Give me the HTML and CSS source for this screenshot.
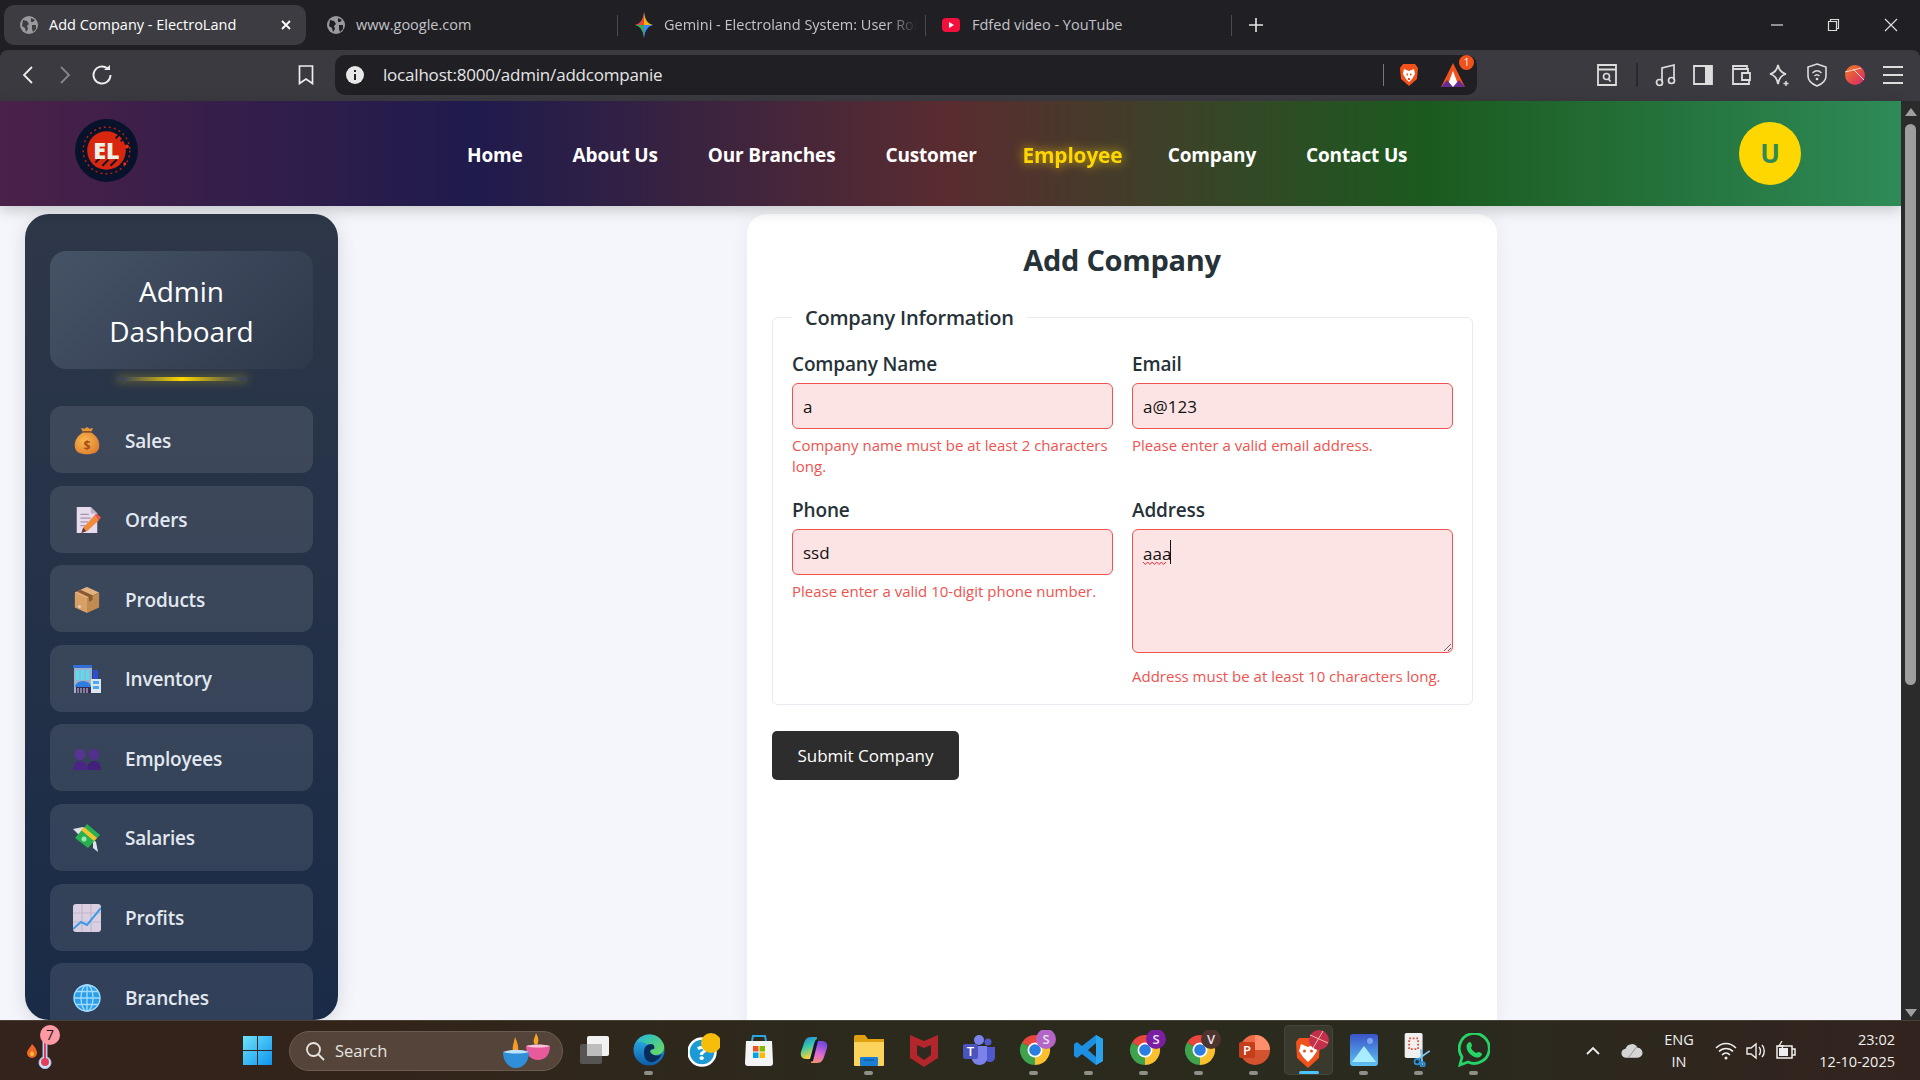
FILE: index.html
```html
<!DOCTYPE html>
<html>
<head>
    <meta charset="UTF-8">
    <title>Add Company - ElectroLand</title>
    <link rel="stylesheet" href="styles.css">
</head>
<body>
    <!-- browser tabs -->
    <div class="tabstrip">
        <div class="tab tab-active">
            <svg class="tab-ico" viewBox="0 0 18 18"><circle cx="9" cy="9" r="9" fill="#9a9a9e"/><path d="M3 4l4 1 2 3-2 2 1 3-2 3-1-4-3-2zM11 2l4 2-2 2-2 0zM12 9l4 0 0 4-3 3-1-3z" fill="#3d3d42"/></svg>
            <span class="tab-title">Add Company - ElectroLand</span>
            <svg class="tab-close" viewBox="0 0 12 12"><path d="M2 2l8 8M10 2l-8 8" stroke="#fff" stroke-width="1.8"/></svg>
        </div>
        <div class="tab tab-google">
            <svg class="tab-ico" viewBox="0 0 18 18"><circle cx="9" cy="9" r="9" fill="#9a9a9e"/><path d="M3 4l4 1 2 3-2 2 1 3-2 3-1-4-3-2zM11 2l4 2-2 2-2 0zM12 9l4 0 0 4-3 3-1-3z" fill="#1f1f24"/></svg>
            <span class="tab-title">www.google.com</span>
        </div>
        <div class="tab tab-gemini">
            <svg class="tab-ico" viewBox="0 0 18 26"><path d="M9 0C9.600 8 13 12 18 13 13 14 9.600 18 9 26 8.400 18 5 14 0 13 5 12 8.400 8 9 0z" fill="#4a90e2"/><path d="M9 0C9.600 8 13 12 18 13H9z" fill="#f4b400"/><path d="M18 13C13 14 9.600 18 9 26V13z" fill="#4285f4"/><path d="M9 26C8.400 18 5 14 0 13H9z" fill="#34a853"/><path d="M0 13C5 12 8.400 8 9 0V13z" fill="#ea4335"/></svg>
            <span class="tab-title tab-fade">Gemini - Electroland System: User Rol</span>
        </div>
        <div class="tab tab-youtube">
            <svg class="tab-ico" viewBox="0 0 18 14"><rect width="18" height="14" rx="4" fill="#f40f3c"/><path d="M7 4l5 3-5 3z" fill="#fff"/></svg>
            <span class="tab-title">Fdfed video - YouTube</span>
        </div>
        <svg class="tab-plus" viewBox="0 0 14 14"><path d="M7 0v14M0 7h14" stroke="#e6e6e6" stroke-width="1.600"/></svg>
        <div class="win-controls">
            <svg viewBox="0 0 14 14"><path d="M1 7h12" stroke="#ddd" stroke-width="1.200"/></svg>
            <svg viewBox="0 0 14 14"><path d="M3.500 3.500V1.500h8v9h-2M1.500 3.500h8v9h-8z" fill="none" stroke="#ddd" stroke-width="1.200"/></svg>
            <svg viewBox="0 0 14 14"><path d="M1 1l12 12M13 1L1 13" stroke="#ddd" stroke-width="1.200"/></svg>
        </div>
    </div>

    <!-- browser toolbar -->
    <div class="toolbar">
        <svg class="tb-nav nav-back" viewBox="0 0 12 20"><path d="M10 2L2 10l8 8" fill="none" stroke="#eee" stroke-width="1.800"/></svg>
        <svg class="tb-nav nav-fwd" viewBox="0 0 12 20"><path d="M2 2l8 8-8 8" fill="none" stroke="#85858a" stroke-width="1.800"/></svg>
        <svg class="tb-nav nav-reload" viewBox="0 0 22 22"><path d="M16.500 4.500A8.500 8.500 0 1 0 19.500 11" fill="none" stroke="#eee" stroke-width="1.900"/><path d="M13 6h6V1z" fill="#eee"/></svg>
        <svg class="tb-nav nav-mark" viewBox="0 0 16 20"><path d="M1.500 1h13v17.500L8 14l-6.500 4.500z" fill="none" stroke="#eee" stroke-width="1.700"/></svg>
        <div class="addressbar">
            <svg class="info-ico" viewBox="0 0 18 18"><circle cx="9" cy="9" r="9" fill="#e8e8e8"/><path d="M9 4v2M9 8v6" stroke="#222" stroke-width="2"/></svg>
            <span class="url">localhost:8000/admin/addcompanie</span>
            <span class="addr-sep"></span>
            <svg class="addr-brave" viewBox="0 0 20 24"><path d="M4 1h12l3 4-1 11-8 7-8-7L1 5z" fill="#f1511b"/><path d="M5 6l5 2 5-2 1 5-3 5-3 3-3-3-3-5z" fill="#fff"/><path d="M7.500 10.500h1.500v2H7.500zM11 10.500h1.500v2H11zM9 15h2v2H9z" fill="#f1511b"/></svg>
            <span class="addr-rewards">
                <svg viewBox="0 0 24 24"><path d="M12 0L24 24H0z" fill="#f1511b"/><path d="M12 8l6 16H6z" fill="#fff"/><path d="M0 24l6-7 6 7zM24 24l-6-7-6 7z" fill="#662d91"/></svg>
                <span class="addr-badge">1</span>
            </span>
        </div>
        <div class="tb-tools">
            <svg class="tool-reader" viewBox="0 0 22 24"><path d="M2 2h18v20H2zM2 6.500h18" fill="none" stroke="#ddd" stroke-width="1.800"/><circle cx="10.500" cy="13.500" r="3" fill="none" stroke="#ddd" stroke-width="1.600"/><path d="M12.500 16l2 2.500" stroke="#ddd" stroke-width="1.600"/></svg>
            <span class="tool-sep"></span>
            <svg class="tool-music" viewBox="0 0 22 24"><path d="M7 19V5l12-3v15" fill="none" stroke="#ddd" stroke-width="1.700"/><circle cx="4.500" cy="19.500" r="3" fill="none" stroke="#ddd" stroke-width="1.700"/><circle cx="16.500" cy="17.500" r="3" fill="none" stroke="#ddd" stroke-width="1.700"/></svg>
            <svg viewBox="0 0 22 24"><path d="M2 3h18v18H2z" fill="none" stroke="#ddd" stroke-width="1.800"/><path d="M13 3h7v18h-7z" fill="#ddd"/></svg>
            <svg viewBox="0 0 22 24"><path d="M17 6V3H3v18h16v-4M3 6h15v4M12 10h8v7h-8z" fill="none" stroke="#ddd" stroke-width="1.800"/></svg>
            <svg viewBox="0 0 22 24"><path d="M10 2c1 5 3 8 8 9-5 1-7 4-8 10-1-6-3-9-8-10 5-1 7-4 8-9z" fill="none" stroke="#ddd" stroke-width="1.700"/><path d="M18 18v5M15.500 20.500h5" stroke="#ddd" stroke-width="1.500"/></svg>
            <svg viewBox="0 0 22 24"><path d="M11 1l9 3v9c0 5-4 8-9 10-5-2-9-5-9-10V4z" fill="none" stroke="#ddd" stroke-width="1.600"/><path d="M6.500 10c3-3 6-3 9 0M8.500 13c1.500-1.500 3.500-1.500 5 0" fill="none" stroke="#ddd" stroke-width="1.400"/><circle cx="11" cy="16" r="1.300" fill="#ddd"/></svg>
            <svg viewBox="0 0 22 24"><defs><linearGradient id="prof" x1="0" y1="0" x2="1" y2="1"><stop offset="0" stop-color="#f47b20"/><stop offset="1" stop-color="#d6246e"/></linearGradient></defs><circle cx="11" cy="12" r="10" fill="url(#prof)"/><path d="M1 9l16 -4M9 6l11 11" stroke="#ffd9c9" stroke-width="1"/></svg>
            <svg viewBox="0 0 22 24"><path d="M1 4h20M1 12h20M1 20h20" stroke="#ddd" stroke-width="2"/></svg>
        </div>
    </div>

    <div class="viewport">
        <div class="page">
            <header class="topnav">
                <div class="logo">
                    <svg viewBox="0 0 62 62"><circle cx="31" cy="31" r="31" fill="#08122a"/><circle cx="31" cy="31" r="19" fill="#d8260f"/><circle cx="31" cy="31" r="23" fill="none" stroke="#b3200e" stroke-width="1.500" stroke-dasharray="2 3"/><path d="M20 43l6-6M27 46l6-6M35 46l6-6M40 19l5-5M45 22l4-4" stroke="#08122a" stroke-width="1.800"/><circle cx="51" cy="27" r="2" fill="#e8301a"/><circle cx="49" cy="44" r="1.500" fill="#e8301a"/><text x="31" y="39" class="logo-text">EL</text></svg>
                </div>
                <nav class="nav-links">
                    <a href="#">Home</a>
                    <a href="#">About Us</a>
                    <a href="#">Our Branches</a>
                    <a href="#">Customer</a>
                    <a href="#" class="nav-current">Employee</a>
                    <a href="#">Company</a>
                    <a href="#">Contact Us</a>
                </nav>
                <div class="avatar">U</div>
            </header>

            <div class="content">
                <aside class="sidebar">
                    <h2 class="side-title">Admin Dashboard</h2>
                    <div class="side-glow"></div>
                    <a class="side-item" href="#">
                        <svg viewBox="0 0 28 32"><defs><radialGradient id="bag" cx=".4" cy=".4" r=".8"><stop offset="0" stop-color="#fbb84e"/><stop offset="1" stop-color="#d9742a"/></radialGradient></defs><path d="M9 5L7 1l4 1 3-2 3 2 4-1-2 4z" fill="#e8963a"/><path d="M10 6h8c7 4 10 9 10 15 0 8-6 10-14 10S0 29 0 21c0-6 3-11 10-15z" fill="url(#bag)"/><path d="M10 5.500h8" stroke="#8a4a1a" stroke-width="1.500"/><text x="14" y="26" class="bag-text">$</text></svg>
                        <span>Sales</span>
                    </a>
                    <a class="side-item" href="#">
                        <svg viewBox="0 0 28 30"><path d="M3 1h15l7 7v21H3z" fill="#e6dcec"/><path d="M18 1v7h7z" fill="#bfb0c6"/><path d="M7 9h9M7 13h11M7 17h8M7 21h5" stroke="#a892ac" stroke-width="1.400"/><path d="M8 29l2-6L22 10l5 5L14 27z" fill="#f28a3c"/><path d="M22 10l2-2 5 4-2 3z" fill="#f0574c"/><path d="M8 29l2-6 3 4z" fill="#5a3a4a"/></svg>
                        <span>Orders</span>
                    </a>
                    <a class="side-item" href="#">
                        <svg viewBox="0 0 28 30"><path d="M14 1L1 7v16l13 6z" fill="#d9a066"/><path d="M14 13L1 7l13-6 13 6z" fill="#e4b27e"/><path d="M14 13l13-6v16l-13 6z" fill="#c08a50"/><path d="M7 4l13 6v5l-4 2v-5L3 6z" fill="#8a5a30"/><circle cx="6" cy="22" r="1.500" fill="#e8d0e0"/></svg>
                        <span>Products</span>
                    </a>
                    <a class="side-item" href="#">
                        <svg viewBox="0 0 28 28"><path d="M1 1h18v27H1z" fill="#9fb2c9"/><path d="M0 0h19v3H0z" fill="#2f6fd6"/><path d="M3 5h3v10H3zM8 5h3v10H8zM13 5h3v10h-3z" fill="#4fe0f5"/><path d="M20 5h5v13h-5z" fill="#2a4fd0"/><path d="M18 14h10v14H18z" fill="#dce6f0"/><path d="M20 16h6v3h-6zM20 21h6v3h-6z" fill="#4aa8f0"/><path d="M2 22a8 6 0 0 1 16 0z" fill="#2e7de0"/><path d="M3 22h15v6H3z" fill="#3b2a55"/><path d="M5 23v5M8 23v5M11 23v5M14 23v5" stroke="#cbd5e1"/></svg>
                        <span>Inventory</span>
                    </a>
                    <a class="side-item" href="#">
                        <svg viewBox="0 0 28 22"><path d="M14 22c0-5 2-9 7-9s7 4 7 9z" fill="#43207c"/><circle cx="21" cy="6.500" r="5.500" fill="#52308e"/><path d="M0 22c0-5 2-9 7-9s7 4 7 9z" fill="#4b2586"/><circle cx="7" cy="6.500" r="5.500" fill="#583494"/></svg>
                        <span>Employees</span>
                    </a>
                    <a class="side-item" href="#">
                        <svg viewBox="0 0 28 28"><path d="M0 5l10-2 4 6-8 2z" fill="#dfe3e8"/><path d="M20 15l3 3 2 10-5-4z" fill="#dfe3e8"/><path d="M2 14L14 0l13 11-12 13z" fill="#26b04f"/><path d="M8 6l13 11 3-3L11 3z" fill="#f4c430"/><circle cx="11" cy="15" r="2.500" fill="#9be8b0"/></svg>
                        <span>Salaries</span>
                    </a>
                    <a class="side-item" href="#">
                        <svg viewBox="0 0 28 28"><rect width="28" height="28" rx="3" fill="#d9cfe0"/><path d="M9 0v28M18 0v28M0 9h28M0 18h28" stroke="#c2b5cc" stroke-width="1.200"/><path d="M0 25l8-7 6 3L28 4" fill="none" stroke="#3b9be8" stroke-width="2"/></svg>
                        <span>Profits</span>
                    </a>
                    <a class="side-item" href="#">
                        <svg viewBox="0 0 28 28"><circle cx="14" cy="14" r="13.500" fill="#2f9ee8"/><g fill="none" stroke="#9fdcff" stroke-width="1.300"><circle cx="14" cy="14" r="13"/><ellipse cx="14" cy="14" rx="6" ry="13"/><path d="M14 1v26M1 14h26M3 7.500h22M3 20.500h22"/></g></svg>
                        <span>Branches</span>
                    </a>
                </aside>

                <main class="main">
                    <div class="card">
                        <h1>Add Company</h1>
                        <form>
                            <fieldset>
                                <legend>Company Information</legend>
                                <div class="form-grid">
                                    <div class="field">
                                        <label for="cname">Company Name</label>
                                        <input id="cname" type="text" value="a">
                                        <p class="err">Company name must be at least 2 characters long.</p>
                                    </div>
                                    <div class="field">
                                        <label for="cmail">Email</label>
                                        <input id="cmail" type="text" value="a@123">
                                        <p class="err">Please enter a valid email address.</p>
                                    </div>
                                    <div class="field">
                                        <label for="cphone">Phone</label>
                                        <input id="cphone" type="text" value="ssd">
                                        <p class="err">Please enter a valid 10-digit phone number.</p>
                                    </div>
                                    <div class="field">
                                        <label for="caddr">Address</label>
                                        <div class="area-wrap">
                                            <textarea id="caddr" spellcheck="false">aaa</textarea>
                                            <svg class="squiggle" viewBox="0 0 28 26"><path d="M0 22l2.300 2.500 2.300-2.500 2.300 2.500 2.300-2.500 2.300 2.500 2.300-2.500 2.300 2.500 2.300-2.500 2.300 2.500 2.300-2.500" fill="none" stroke="#e8303a" stroke-width="1"/><path d="M27.500 0v24" stroke="#111" stroke-width="1"/></svg>
                                        </div>
                                        <p class="err err-area">Address must be at least 10 characters long.</p>
                                    </div>
                                </div>
                            </fieldset>
                            <button type="button" class="submit-btn">Submit Company</button>
                        </form>
                    </div>
                </main>
            </div>
        </div>
        <div class="scrollbar">
            <span class="sb-up"></span>
            <span class="sb-thumb"></span>
            <span class="sb-down"></span>
        </div>
    </div>

    <!-- windows taskbar -->
    <footer class="taskbar">
        <div class="tk-weather">
            <svg viewBox="0 0 44 36"><path d="M8 11c3 3 5 6 5 9a5 5 0 0 1-10 0c0-3 3-5 5-9z" fill="#f0672a"/><path d="M8 18c1 1 2 2 2 3a2 2 0 0 1-4 0c0-1 1-2 2-3z" fill="#fbc02d"/><path d="M19 8h4v16a6 6 0 1 1-4 0z" fill="#cfe3f7" stroke="#9ec4ea"/><circle cx="21" cy="29" r="4" fill="#e33d5a"/><path d="M21 8v18" stroke="#e33d5a" stroke-width="2"/></svg>
            <span class="tk-temp">7</span>
        </div>
        <svg class="tk-start" viewBox="0 0 29 29"><defs><linearGradient id="wn" x1="0" y1="0" x2="1" y2="1"><stop offset="0" stop-color="#6ee4f8"/><stop offset="1" stop-color="#0c93f0"/></linearGradient></defs><path d="M0 0h14v14H0zM15 0h14v14H15zM0 15h14v14H0zM15 15h14v14H15z" fill="url(#wn)"/></svg>
        <div class="tk-search">
            <svg viewBox="0 0 20 20"><circle cx="8.500" cy="8.500" r="6.500" fill="none" stroke="#e8e4e0" stroke-width="1.800"/><path d="M13 13l6 6" stroke="#e8e4e0" stroke-width="1.800"/></svg>
            <span>Search</span>
            <svg class="tk-diya" viewBox="0 0 50 36"><path d="M34 0c2 4 3 6 2 10-1 2-3 2-4 0-1-3 1-6 2-10z" fill="#f5a623"/><path d="M24 13h24c0 9-5 14-12 14s-12-5-12-14z" fill="#e85a9b"/><path d="M24 13c6-2 18-2 24 0-6 2-18 2-24 0z" fill="#f9c6d8"/><path d="M13 4c2 5 4 9 3 14-1 2-4 2-5 0-1-4 1-9 2-14z" fill="#f59a23"/><path d="M1 19h26c0 10-6 16-13 16S1 29 1 19z" fill="#2f8fd8"/><path d="M1 19c7-3 19-3 26 0-7 2-19 2-26 0z" fill="#bde3fa"/></svg>
        </div>
        <div class="tk-apps">
            <div class="tk-app"><svg viewBox="0 0 32 34"><rect x="9" y="3" width="22" height="20" rx="2" fill="#f2f2f2"/><rect x="2" y="11" width="22" height="20" rx="2" fill="#5e5e5e" opacity=".85"/><rect x="9" y="11" width="15" height="12" fill="#bdbdbd"/></svg></div>
            <div class="tk-app has-dot"><svg viewBox="0 0 32 34"><defs><linearGradient id="edg" x1="0" y1="0" x2="0" y2="1"><stop offset="0" stop-color="#2fb6ee"/><stop offset="1" stop-color="#0c5da8"/></linearGradient><linearGradient id="edg2" x1="0" y1="0" x2="1" y2="1"><stop offset="0" stop-color="#22b8d8"/><stop offset="1" stop-color="#6fdc55"/></linearGradient></defs><circle cx="16" cy="17" r="15.500" fill="url(#edg)"/><path d="M4 9c6-10 22-11 27 3 1 6-3 10-8 10-6 0-7-4-5-6-2-5-9-8-14-7z" fill="url(#edg2)"/><path d="M11 19c0-5 3-8 7-8 3 0 4 3 3 5-4 0-5 3-2 5 3 2 7 2 10 0-3 6-8 9-12 8-5-1-6-6-6-10z" fill="#0a2c5c"/></svg></div>
            <div class="tk-app"><svg viewBox="0 0 32 34"><circle cx="14" cy="19" r="13.500" fill="#1c9ad6" stroke="#fff" stroke-width="2.500"/><text x="14" y="27" class="help-text">?</text><circle cx="23" cy="10" r="10" fill="#f7bd0b"/></svg></div>
            <div class="tk-app"><svg viewBox="0 0 32 34"><path d="M9 8l1-5h12l1 5" fill="none" stroke="#2aa5e0" stroke-width="2"/><path d="M3 8h26l1 22a3 3 0 0 1-3 3H5a3 3 0 0 1-3-3z" fill="#f4f4f4"/><path d="M10 13h5.500v5.500H10z" fill="#f25022"/><path d="M16.500 13H22v5.500h-5.500z" fill="#7fba00"/><path d="M10 19.500h5.500V25H10z" fill="#00a4ef"/><path d="M16.500 19.500H22V25h-5.500z" fill="#ffb900"/></svg></div>
            <div class="tk-app"><svg viewBox="0 0 32 34"><defs><linearGradient id="cop1" x1="0" y1="0" x2=".3" y2="1"><stop offset="0" stop-color="#2a7de8"/><stop offset=".5" stop-color="#35c9a8"/><stop offset="1" stop-color="#f4d23c"/></linearGradient><linearGradient id="cop2" x1=".3" y1="0" x2="0" y2="1"><stop offset="0" stop-color="#7a4ae0"/><stop offset=".5" stop-color="#e06ad0"/><stop offset="1" stop-color="#f79a5a"/></linearGradient></defs><path d="M19 4h-6C8 4 7 7 5 13l-2 6c-1 4 1 7 5 7h4c3 0 4-2 5-5z" fill="url(#cop1)"/><path d="M13 30h6c5 0 6-3 8-9l2-6c1-4-1-7-5-7h-4c-3 0-4 2-5 5z" fill="url(#cop2)"/><path d="M17 8l-5 18c-1 2 2 3 3 2l5-20c0-2-2-2-3 0z" fill="#101830"/></svg></div>
            <div class="tk-app has-dot"><svg viewBox="0 0 32 34"><path d="M1 4a2 2 0 0 1 2-2h9l3 4h16v26H1z" fill="#e0a010"/><path d="M1 9h30v23a1 1 0 0 1-1 1H2a1 1 0 0 1-1-1z" fill="#fcd45c"/><rect x="7" y="24" width="18" height="9" rx="1" fill="#1a7fd4"/><path d="M11 27h10" stroke="#0b4f94"/></svg></div>
            <div class="tk-app"><svg viewBox="0 0 32 34"><path d="M2 2l14 6 14-6v23l-14 9-14-9z" fill="#b3262c"/><path d="M9 12l7 3 7-3v10l-7 5-7-5z" fill="#2e2a20"/></svg></div>
            <div class="tk-app"><svg viewBox="0 0 32 34"><circle cx="25" cy="9" r="3.500" fill="#5059c9"/><path d="M21 14h11v9a5 5 0 0 1-10 2z" fill="#5059c9"/><circle cx="16" cy="7" r="5" fill="#7b83eb"/><path d="M9 13h15v13a7.500 6 0 0 1-15 0z" fill="#7b83eb"/><rect x="0" y="11" width="15" height="15" rx="2" fill="#4b53bc"/><text x="7.500" y="23" class="tile-text">T</text></svg></div>
            <div class="tk-app tk-chrome has-dot"><svg viewBox="0 0 44 40"><use href="#chrome-ic"/><circle cx="34" cy="9" r="10" fill="#b565c8"/><text x="34" y="14" class="chip-text">S</text></svg></div>
            <div class="tk-app has-dot"><svg viewBox="0 0 32 34"><path d="M23 2l7 4v22l-7 4L9 21l-5 4-3-2V11l3-2 5 4z" fill="#1c8fe0"/><path d="M23 10l-8 7 8 7z" fill="#2b2a1e"/><path d="M23 2l7 4v22l-7 4z" fill="#2aa3ee"/></svg></div>
            <div class="tk-app tk-chrome has-dot"><svg viewBox="0 0 44 40"><use href="#chrome-ic"/><circle cx="34" cy="9" r="10" fill="#7a1fa2"/><text x="34" y="14" class="chip-text">S</text></svg></div>
            <div class="tk-app tk-chrome has-dot"><svg viewBox="0 0 44 40"><use href="#chrome-ic"/><circle cx="34" cy="9" r="10" fill="#4e342e"/><text x="34" y="14" class="chip-text">V</text></svg></div>
            <div class="tk-app has-dot"><svg viewBox="0 0 32 34"><circle cx="17" cy="17" r="15" fill="#d35230"/><path d="M17 2a15 15 0 0 1 15 15H17z" fill="#ff8f6b"/><path d="M17 2a15 15 0 0 0-15 15h15z" fill="#ed6c47"/><rect x="1" y="9" width="16" height="16" rx="2" fill="#c43e1c"/><text x="9" y="22" class="tile-text">P</text></svg></div>
            <div class="tk-app tk-current tk-chrome"><svg viewBox="0 0 44 40"><path d="M12 8h18l3 4-1 16-11 10-11-10-1-16z" fill="#f1511b"/><path d="M14 14l7 3 7-3 2 7-4 6-5 5-5-5-4-6z" fill="#fff"/><circle cx="17.500" cy="21" r="1.500" fill="#f1511b"/><circle cx="24.500" cy="21" r="1.500" fill="#f1511b"/><circle cx="32" cy="10" r="10" fill="#c2304e"/><path d="M23 5l18 8M26 18l10-17" stroke="#ffb9a8" stroke-width="1"/></svg></div>
            <div class="tk-app has-dot"><svg viewBox="0 0 32 34"><defs><linearGradient id="pho" x1="0" y1="0" x2="0" y2="1"><stop offset="0" stop-color="#3a54c9"/><stop offset="1" stop-color="#5fc3f2"/></linearGradient></defs><rect x="2" y="1" width="28" height="32" rx="3" fill="url(#pho)"/><path d="M4 29L16 13l12 16z" fill="#a8ecff"/><circle cx="22" cy="8" r="3" fill="#7fa3f0"/></svg></div>
            <div class="tk-app has-dot"><svg viewBox="0 0 32 38"><rect width="20" height="28" rx="2" fill="#f0f0f0"/><path d="M5 6h10v12H5z" fill="none" stroke="#e0503a" stroke-width="2" stroke-dasharray="2 2"/><path d="M28 20L14 30M18 18l2 18" stroke="#7ec8f0" stroke-width="2"/><circle cx="14" cy="32" r="3" fill="none" stroke="#2b8fd8" stroke-width="2"/><circle cx="20" cy="35" r="2.500" fill="none" stroke="#2b8fd8" stroke-width="2"/></svg></div>
            <div class="tk-app has-dot"><svg viewBox="0 0 32 34"><path d="M2 32l2-8A15 15 0 1 1 10 29z" fill="none" stroke="#25d366" stroke-width="2.800"/><path d="M10 10c2-2 3-1 4 2 0 2-1 2-1 3 1 2 3 4 5 5 1 0 1-1 3-1 3 1 4 2 2 4-3 3-8 1-11-2s-5-8-2-11z" fill="#25d366"/></svg></div>
        </div>
        <div class="tk-tray">
            <svg class="tray-chev" viewBox="0 0 14 9"><path d="M1 8l6-6 6 6" fill="none" stroke="#eee" stroke-width="1.800"/></svg>
            <svg class="tray-cloud" viewBox="0 0 24 18"><path d="M6 17a5 5 0 0 1-1-10 7 7 0 0 1 13-1 5.500 5.500 0 0 1 0 11z" fill="#d5d5d5"/><path d="M8 17l9-12" stroke="#8f8f8f"/></svg>
            <div class="tray-lang">ENG<br>IN</div>
            <svg class="tray-wifi" viewBox="0 0 22 18"><path d="M1 6c6-6 14-6 20 0M4 9.500c4-4 10-4 14 0M7 13c2.500-2.500 5.500-2.500 8 0" fill="none" stroke="#eee" stroke-width="1.600"/><circle cx="11" cy="16" r="1.500" fill="#eee"/></svg>
            <svg class="tray-vol" viewBox="0 0 22 18"><path d="M1 6h4l5-4v14l-5-4H1z" fill="none" stroke="#eee" stroke-width="1.400"/><path d="M13 5c2 2 2 6 0 8M16 3c3 3 3 9 0 12" fill="none" stroke="#eee" stroke-width="1.400"/></svg>
            <svg class="tray-batt" viewBox="0 0 22 20"><path d="M3 5h15v12H3zM18 8h3v6h-3" fill="none" stroke="#eee" stroke-width="1.500"/><path d="M5 7h9v8H5z" fill="#eee"/><path d="M8 0l-3 5h4l-2 5" fill="none" stroke="#eee" stroke-width="1.300"/></svg>
            <div class="tray-clock">23:02<br>12-10-2025</div>
        </div>
    </footer>

    <svg class="icon-defs" width="0" height="0">
        <symbol id="chrome-ic" viewBox="0 0 44 40">
            <path d="M23 20L10 12.500A15 15 0 0 1 36 12.500z" fill="#e8453c"/>
            <path d="M23 20L36 12.500A15 15 0 0 1 23 35z" fill="#fbc02d"/>
            <path d="M23 20L23 35A15 15 0 0 1 10 12.500z" fill="#3fa34d"/>
            <circle cx="23" cy="20" r="7.500" fill="#fff"/>
            <circle cx="23" cy="20" r="5.800" fill="#2a7de1"/>
        </symbol>
    </svg>
</body>
</html>
```

FILE: styles.css
```css
* {
    box-sizing: border-box;
}
html, body {
    margin: 0;
    padding: 0;
    height: 100%;
    overflow: hidden;
}
body {
    display: flex;
    flex-direction: column;
    height: 1080px;
    font-family: "Open Sans", "Noto Sans", sans-serif;
    background-color: #1f1f24;
}
.icon-defs {
    position: absolute;
}

/* tabs */
.tabstrip {
    display: flex;
    align-items: center;
    height: 50px;
    flex: none;
    background-color: #1f1f24;
    color: #c4c4c8;
    font-size: 14.5px;
}
.tab {
    display: flex;
    align-items: center;
    height: 40px;
    flex: none;
    position: relative;
}
.tab-title {
    white-space: nowrap;
    padding-bottom: 2px;
}
.tab-ico {
    width: 18px;
    height: 18px;
    flex: none;
}
.tab-active {
    width: 302px;
    margin-left: 4px;
    padding-left: 16px;
    border-radius: 10px;
    background-color: #3c3c42;
    color: #ffffff;
}
.tab-active .tab-title {
    margin-left: 11px;
}
.tab-close {
    width: 12px;
    height: 12px;
    margin-left: auto;
    margin-right: 14px;
}
.tab-google {
    width: 311px;
    padding-left: 21px;
}
.tab-google .tab-title {
    margin-left: 11px;
}
.tab-gemini, .tab-youtube {
    border-left: 1px solid #4a4a50;
    height: 21px;
}
.tab-gemini {
    width: 308px;
    padding-left: 17px;
}
.tab-gemini .tab-ico {
    height: 26px;
}
.tab-gemini .tab-title {
    margin-left: 11px;
    -webkit-mask-image: linear-gradient(90deg, #000 88%, transparent);
    mask-image: linear-gradient(90deg, #000 88%, transparent);
}
.tab-youtube {
    width: 307px;
    padding-left: 16px;
    border-right: 1px solid #4a4a50;
}
.tab-youtube .tab-title {
    margin-left: 12px;
}
.tab-plus {
    width: 14px;
    height: 14px;
    margin-left: 17px;
}
.win-controls {
    display: flex;
    gap: 43px;
    margin-left: auto;
    margin-right: 22px;
}
.win-controls svg {
    width: 14px;
    height: 14px;
}

/* toolbar */
.toolbar {
    display: flex;
    align-items: center;
    height: 51px;
    flex: none;
    padding-bottom: 1px;
    border-radius: 8px 8px 0 0;
    background-color: #3a3a40;
}
.tb-nav {
    flex: none;
}
.nav-back {
    width: 12px;
    height: 20px;
    margin-left: 22px;
}
.nav-fwd {
    width: 12px;
    height: 20px;
    margin-left: 25px;
}
.nav-reload {
    width: 22px;
    height: 22px;
    margin-left: 20px;
}
.nav-mark {
    width: 16px;
    height: 20px;
    margin-left: 185px;
}
.addressbar {
    display: flex;
    align-items: center;
    width: 1142px;
    height: 40px;
    margin-left: 21px;
    padding-left: 11px;
    border-radius: 10px;
    background-color: #1f1f24;
    flex: none;
}
.info-ico {
    width: 18px;
    height: 18px;
}
.url {
    margin-left: 19px;
    padding-bottom: 2px;
    color: #e6e6e6;
    font-size: 17px;
    letter-spacing: -0.2px;
}
.addr-sep {
    width: 1px;
    height: 22px;
    margin-left: auto;
    background-color: #77777c;
}
.addr-brave {
    width: 20px;
    height: 24px;
    margin-left: 15px;
}
.addr-rewards {
    position: relative;
    display: flex;
    width: 24px;
    height: 24px;
    margin-left: 22px;
    margin-right: 12px;
}
.addr-badge {
    position: absolute;
    top: -8px;
    right: -9px;
    width: 15px;
    height: 15px;
    border-radius: 50%;
    background-color: #f1511b;
    color: #ffffff;
    font-size: 10px;
    line-height: 15px;
    text-align: center;
}
.tb-tools {
    display: flex;
    align-items: center;
    margin-left: 119px;
}
.tb-tools svg {
    width: 22px;
    height: 24px;
    margin-right: 16px;
}
.tb-tools .tool-reader {
    margin-right: 18px;
}
.tb-tools .tool-music {
    margin-right: 15px;
}
.tool-sep {
    width: 2px;
    height: 24px;
    margin-right: 17px;
    background-color: #2a2a2e;
}

/* page inside the browser */
.viewport {
    display: flex;
    flex: 1;
    min-height: 0;
}
.page {
    flex: 1;
    min-width: 0;
    display: flex;
    flex-direction: column;
    background-color: #f4f6fb;
}
.topnav {
    position: relative;
    z-index: 2;
    display: flex;
    align-items: center;
    height: 105px;
    flex: none;
    padding-left: 75px;
    background: linear-gradient(90deg, #4a2148 0%, #1f1b4d 25%, #5a2c30 50%, #1b5a1f 75%, #2e8b57 100%);
    box-shadow: 0 4px 14px rgba(0, 0, 0, 0.2);
}
.logo {
    width: 63px;
    height: 63px;
    margin-bottom: 7px;
    flex: none;
}
.logo svg {
    display: block;
}
.logo-text {
    fill: #eef2e6;
    font-family: "Open Sans", sans-serif;
    font-size: 23px;
    font-weight: 800;
    text-anchor: middle;
}
.nav-links {
    display: flex;
    align-items: center;
    margin-left: 329px;
    padding-top: 2px;
}
.nav-links a {
    color: #ffffff;
    font-size: 19px;
    font-weight: 700;
    letter-spacing: -0.15px;
    text-decoration: none;
    margin-right: 50px;
}
.nav-links .nav-current {
    color: #ffd700;
    transform: scale(1.1);
    text-shadow: 0 0 10px rgba(255, 215, 0, 0.8);
}
.avatar {
    width: 62px;
    height: 63px;
    margin-left: auto;
    margin-right: 100px;
    border-radius: 50%;
    background-color: #ffd700;
    color: #2e8b57;
    font-size: 26px;
    font-weight: 700;
    line-height: 63px;
    text-align: center;
}
.content {
    display: flex;
    flex: 1;
    min-height: 0;
    padding: 8px 0 0 25px;
}

/* sidebar */
.sidebar {
    width: 313px;
    flex: none;
    padding: 37px 25px 0;
    border-radius: 24px;
    overflow: hidden;
    background: linear-gradient(180deg, #2d3748, #1a2b47);
    box-shadow: 0 4px 20px rgba(0, 0, 0, 0.12);
}
.side-title {
    height: 118px;
    margin: 0;
    padding: 20px 40px;
    border-radius: 16px;
    background: linear-gradient(135deg, #465265, #2e394c);
    color: #ffffff;
    font-size: 28px;
    font-weight: 400;
    line-height: 40px;
    text-align: center;
}
.side-glow {
    width: 132px;
    height: 4px;
    margin: 8px auto 25px;
    border-radius: 2px;
    background: linear-gradient(90deg, #3a4556 5%, #ffd700 50%, #3a4556 95%);
    box-shadow: 0 0 10px rgba(255, 215, 0, 0.45);
}
.side-item {
    display: flex;
    align-items: center;
    gap: 24px;
    height: 67px;
    margin-bottom: 12.6px;
    padding: 2px 0 0 23px;
    border-radius: 12px;
    background-color: rgba(255, 255, 255, 0.1);
    color: #e2e8f0;
    font-size: 19px;
    font-weight: 600;
    letter-spacing: -0.2px;
    text-decoration: none;
    flex: none;
}
.side-item svg {
    width: 28px;
    height: 28px;
    flex: none;
}
.bag-text {
    fill: #a84f1c;
    font-family: "Open Sans", sans-serif;
    font-size: 14px;
    font-weight: 700;
    text-anchor: middle;
}

/* form card */
.main {
    flex: 1;
    min-width: 0;
    display: flex;
    justify-content: center;
    padding-left: 5px;
}
.card {
    width: 750px;
    padding: 25px;
    border-radius: 20px 20px 0 0;
    background-color: #ffffff;
    box-shadow: 0 4px 20px rgba(0, 0, 0, 0.06);
    color: #263238;
}
.card h1 {
    margin: 0 0 23px;
    font-size: 29px;
    font-weight: 700;
    line-height: 42px;
    letter-spacing: -0.3px;
    text-align: center;
}
fieldset {
    margin: 0;
    padding: 20px 19px 17px;
    border: 1px solid #e8eaf0;
    border-radius: 6px;
}
legend {
    margin-left: 0;
    padding: 0 13px;
    font-size: 20px;
    font-weight: 600;
    line-height: 27px;
    letter-spacing: -0.2px;
}
.form-grid {
    display: grid;
    grid-template-columns: 321px 321px;
    column-gap: 19px;
    row-gap: 20px;
}
.field label {
    display: block;
    margin-bottom: 6px;
    font-size: 19px;
    font-weight: 600;
    line-height: 26px;
    letter-spacing: -0.15px;
}
.field input, .field textarea {
    display: block;
    width: 321px;
    padding: 0 10px;
    border: 1px solid #ef5350;
    border-radius: 6px;
    outline: none;
    background-color: #fde4e4;
    color: #111111;
    font-family: inherit;
    font-size: 17px;
}
.field input {
    height: 46px;
}
.field textarea {
    height: 124px;
    padding-top: 12px;
    resize: vertical;
}
.area-wrap {
    position: relative;
}
.squiggle {
    position: absolute;
    left: 11px;
    top: 11px;
    width: 28px;
    height: 26px;
}
.err {
    margin: 6px 0 0;
    color: #ef5350;
    font-size: 15px;
    line-height: 21px;
}
.err-area {
    margin-top: 13px;
}
.submit-btn {
    display: block;
    width: 187px;
    height: 49px;
    margin-top: 26px;
    border: 0;
    border-radius: 5px;
    background-color: #2d2d2d;
    color: #ffffff;
    font-family: inherit;
    font-size: 17px;
}

/* scrollbar */
.scrollbar {
    position: relative;
    z-index: 3;
    width: 19px;
    flex: none;
    display: flex;
    flex-direction: column;
    align-items: center;
    background-color: #2b2b2b;
}
.sb-up {
    margin-top: 7px;
    border-left: 6px solid transparent;
    border-right: 6px solid transparent;
    border-bottom: 8px solid #a0a0a0;
}
.sb-thumb {
    width: 11px;
    height: 561px;
    margin-top: 8px;
    border-radius: 6px;
    background-color: #9e9e9e;
}
.sb-down {
    margin-top: auto;
    margin-bottom: 3px;
    border-left: 6px solid transparent;
    border-right: 6px solid transparent;
    border-top: 8px solid #a0a0a0;
}

/* taskbar */
.taskbar {
    display: flex;
    align-items: center;
    height: 60px;
    flex: none;
    border-top: 1px solid #4a4238;
    background: linear-gradient(90deg, #33231c 0%, #33241a 20%, #2b2a1c 45%, #2a2a1e 75%, #33231e 100%);
    color: #f0f0f0;
}
.tk-weather {
    position: relative;
    width: 44px;
    height: 36px;
    margin-left: 24px;
    flex: none;
}
.tk-weather svg {
    display: block;
    width: 44px;
    height: 36px;
}
.tk-temp {
    position: absolute;
    left: 16px;
    top: -8px;
    width: 20px;
    height: 20px;
    border-radius: 50%;
    background-color: #ff9aa5;
    color: #1a1a1a;
    font-size: 14px;
    line-height: 20px;
    text-align: center;
}
.tk-start {
    width: 29px;
    height: 29px;
    margin-left: 175px;
    flex: none;
}
.tk-search {
    display: flex;
    align-items: center;
    width: 274px;
    height: 40px;
    margin-left: 17px;
    padding-left: 15px;
    border: 1px solid #6a5c50;
    border-radius: 20px;
    background-color: #54443a;
    color: #e8e4e0;
    font-size: 16.5px;
    flex: none;
}
.tk-search svg {
    width: 20px;
    height: 20px;
}
.tk-search span {
    margin-left: 10px;
}
.tk-search .tk-diya {
    width: 50px;
    height: 36px;
    margin-left: auto;
    margin-right: 10px;
}
.tk-apps {
    display: flex;
    margin-left: 3px;
    flex: none;
}
.tk-app {
    position: relative;
    display: flex;
    align-items: center;
    justify-content: center;
    width: 55px;
    height: 59px;
    padding-bottom: 1px;
}
.tk-app svg {
    width: 32px;
    height: 34px;
    flex: none;
    position: relative;
}
.tk-chrome svg {
    width: 44px;
    height: 40px;
}
.has-dot::after {
    content: "";
    position: absolute;
    left: 23px;
    bottom: 5px;
    width: 9px;
    height: 4px;
    border-radius: 2px;
    background-color: #8f8f8a;
}
.tk-current::before {
    content: "";
    position: absolute;
    left: 3px;
    right: 3px;
    top: 4px;
    bottom: 5px;
    border: 1px solid rgba(255, 255, 255, 0.07);
    border-radius: 5px;
    background-color: rgba(255, 255, 255, 0.07);
}
.tk-current::after {
    content: "";
    position: absolute;
    left: 18px;
    bottom: 6px;
    width: 20px;
    height: 3px;
    border-radius: 2px;
    background-color: #4cc2ff;
}
.chip-text, .tile-text, .help-text {
    font-family: "Open Sans", sans-serif;
    font-weight: 600;
    text-anchor: middle;
}
.chip-text {
    fill: #e8e0f0;
    font-size: 13px;
}
.tile-text {
    fill: #ffffff;
    font-size: 13px;
}
.help-text {
    fill: #ffffff;
    font-size: 20px;
    font-weight: 800;
}
.tk-tray {
    display: flex;
    align-items: center;
    margin-left: 85px;
    flex: none;
    font-size: 14.5px;
    line-height: 22px;
}
.tray-chev {
    width: 14px;
    height: 9px;
}
.tray-cloud {
    width: 22px;
    height: 17px;
    margin-left: 21px;
}
.tray-lang {
    width: 40px;
    margin-left: 16px;
    text-align: center;
}
.tray-wifi {
    width: 22px;
    height: 18px;
    margin-left: 16px;
}
.tray-vol {
    width: 22px;
    height: 18px;
    margin-left: 9px;
}
.tray-batt {
    width: 22px;
    height: 20px;
    margin-left: 6px;
}
.tray-clock {
    width: 90px;
    margin-left: 9px;
    text-align: right;
}
```
